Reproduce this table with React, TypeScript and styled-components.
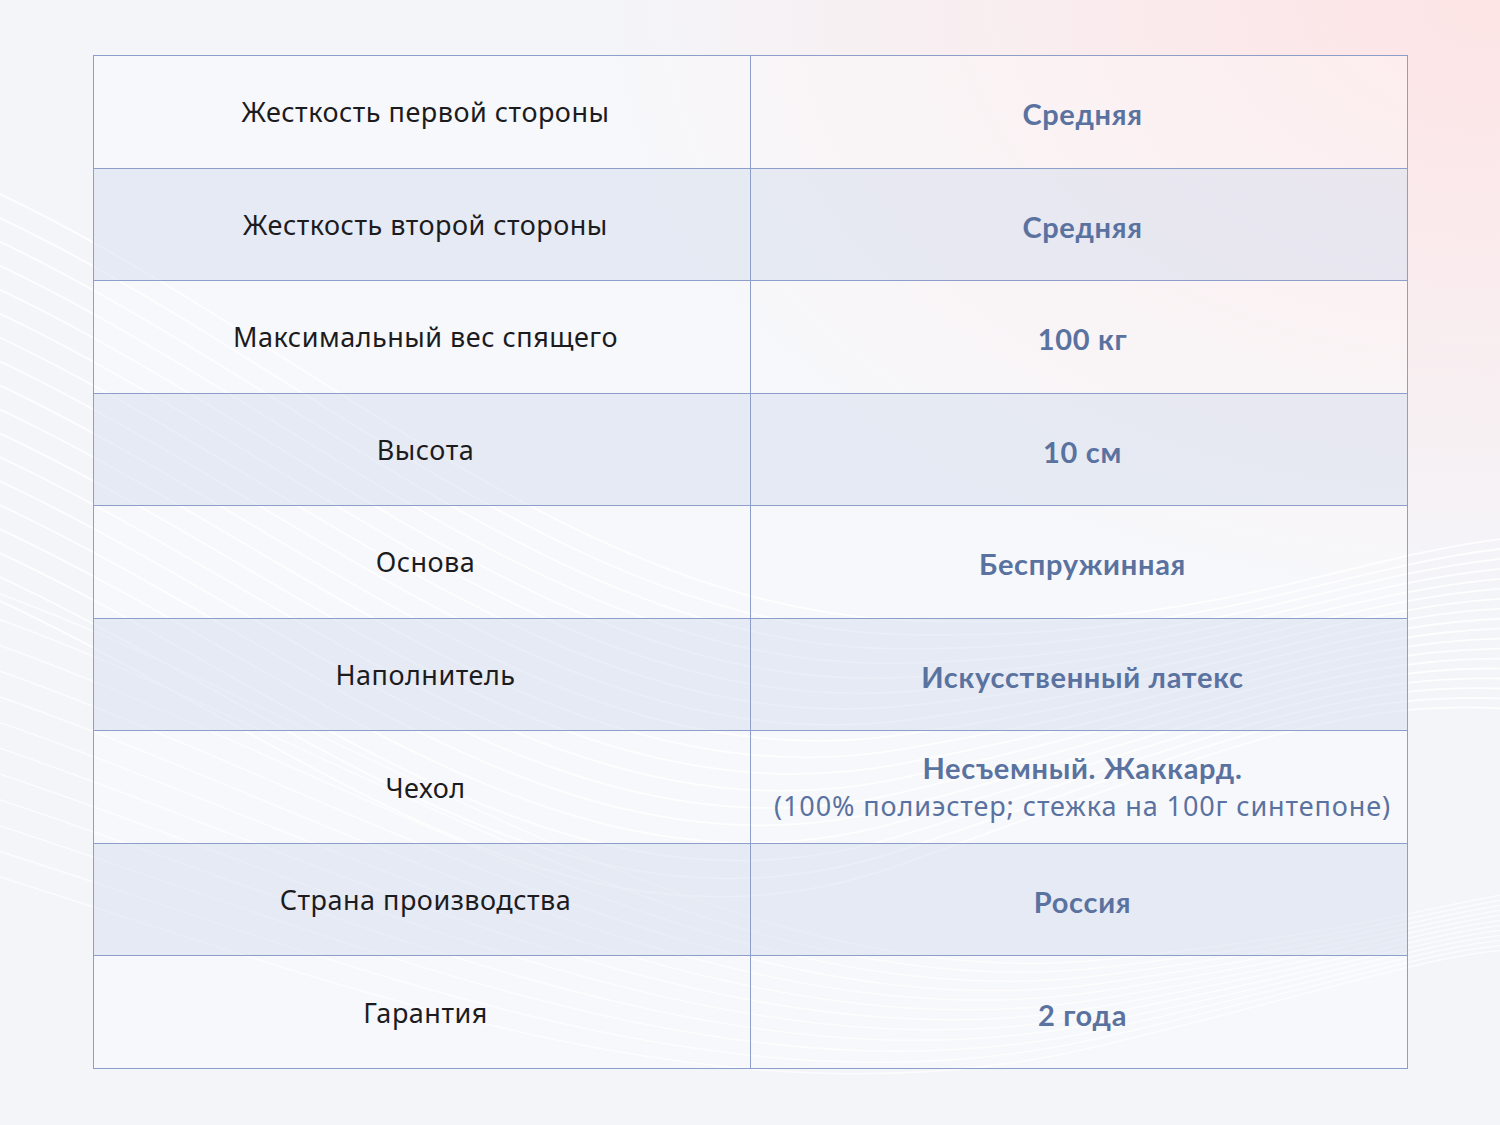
import React from 'react'
import styled, {createGlobalStyle} from 'styled-components'

const GlobalStyle = createGlobalStyle`
  html, body {
    margin: 0;
    padding: 0;
  }
  body {
    font-family: Lato, "Noto Sans", sans-serif;
    background: #f4f5f9;
  }
`

const Page = styled.div`
  position: relative;
  width: 1500px;
  height: 1125px;
  overflow: hidden;
  background:
    radial-gradient(ellipse 900px 600px at 100% 0%, #fde4e5 0%, rgba(253, 230, 231, 0.75) 35%, rgba(244, 245, 249, 0) 100%),
    #f4f5f9;
`

const Waves = styled.svg`
  position: absolute;
  inset: 0;
  pointer-events: none;
`

const Content = styled.div`
  position: relative;
  padding: 55px 92px 0 93px;
`

const Table = styled.div`
  display: grid;
  grid-template-columns: 657px 657px;
  border-top: 1px solid #8d9ecb;
  border-left: 1px solid #8d9ecb;
`

const Cell = styled.div<{$shaded: boolean; $value?: boolean}>`
  box-sizing: border-box;
  height: 112.55px;
  display: flex;
  flex-direction: column;
  align-items: center;
  justify-content: center;
  text-align: center;
  border-right: 1px solid #8d9ecb;
  border-bottom: 1px solid #8d9ecb;
  background: ${p => (p.$shaded ? 'rgba(221, 227, 240, 0.62)' : 'rgba(255, 255, 255, 0.3)')};
  padding-top: ${p => (p.$value ? '4px' : '0')};
  padding-left: 7px;
`

const Label = styled.span`
  font-family: "Noto Sans", sans-serif;
  font-size: 27px;
  color: #1c1c1f;
  letter-spacing: 0.5px;
`

const Value = styled.span`
  font-family: Lato, sans-serif;
  font-weight: 700;
  font-size: 29px;
  color: #5a72a0;
  letter-spacing: 0.7px;
`

const Note = styled.span`
  font-family: "Noto Sans", sans-serif;
  font-size: 27px;
  color: #5a72a0;
  letter-spacing: 0.9px;
  margin-top: 2px;
`

const rows: {label: string; value: string; note?: string}[] = [
  {label: 'Жесткость первой стороны', value: 'Средняя'},
  {label: 'Жесткость второй стороны', value: 'Средняя'},
  {label: 'Максимальный вес спящего', value: '100 кг'},
  {label: 'Высота', value: '10 см'},
  {label: 'Основа', value: 'Беспружинная'},
  {label: 'Наполнитель', value: 'Искусственный латекс'},
  {label: 'Чехол', value: 'Несъемный. Жаккард.', note: '(100% полиэстер; стежка на 100г синтепоне)'},
  {label: 'Страна производства', value: 'Россия'},
  {label: 'Гарантия', value: '2 года'},
]

const wavePaths = Array.from({length: 18}, (_, i) => {
  const o = i * 24
  return `M -200 ${120 + o} C 200 ${220 + o}, 500 ${600 + o}, 900 ${620 + o * 0.6} S 1400 ${500 + o * 0.4}, 1700 ${540 + o * 0.5}`
})

const wavePaths2 = Array.from({length: 12}, (_, i) => {
  const o = i * 26
  return `M -100 ${560 + o} C 300 ${680 + o}, 700 ${1000 + o * 0.5}, 1100 ${960 + o * 0.3} S 1500 ${860 + o * 0.2}, 1700 ${900 + o * 0.3}`
})

const App: React.FC = () => {
  return (
    <Page>
      <GlobalStyle />
      <Waves width="1500" height="1125" viewBox="0 0 1500 1125">
        {wavePaths.map((d, i) => (
          <path key={i} d={d} fill="none" stroke="#ffffff" strokeOpacity={0.85} strokeWidth={1.8} />
        ))}
        {wavePaths2.map((d, i) => (
          <path key={'b' + i} d={d} fill="none" stroke="#ffffff" strokeOpacity={0.7} strokeWidth={1.5} />
        ))}
      </Waves>
      <Content>
        <Table>
          {rows.map((r, i) => (
            <React.Fragment key={r.label}>
              <Cell $shaded={i % 2 === 1}>
                <Label>{r.label}</Label>
              </Cell>
              <Cell $shaded={i % 2 === 1} $value={!r.note}>
                <Value>{r.value}</Value>
                {r.note && <Note>{r.note}</Note>}
              </Cell>
            </React.Fragment>
          ))}
        </Table>
      </Content>
    </Page>
  )
}

export default App
